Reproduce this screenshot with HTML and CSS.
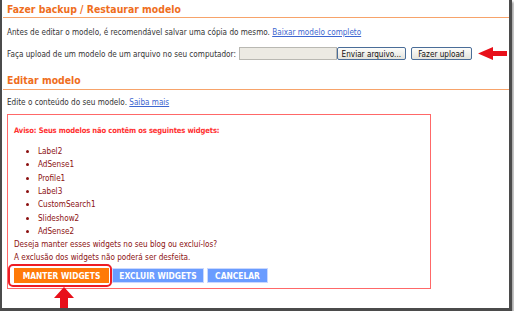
FILE: index.html
```html
<!DOCTYPE html>
<html lang="pt">
<head>
  <meta charset="UTF-8" />
  <title>Editar modelo</title>
  <link rel="stylesheet" href="styles.css">
</head>
<body>

  <div class="shot">

    <!-- Backup / restaurar -->
    <h2>Fazer backup / Restaurar modelo</h2>
    <p class="intro">Antes de editar o modelo, é recomendável salvar uma cópia do mesmo. <a href="#">Baixar modelo completo</a></p>

    <div class="upload-row">
      <span>Faça upload de um modelo de um arquivo no seu computador:</span>
      <span class="file-box"></span>
      <button class="xp-btn browse">Enviar arquivo...</button>
      <button class="xp-btn upload">Fazer upload</button>
      <svg class="arrow-left" width="29" height="13" viewBox="0 0 29 13">
        <polygon points="0,6.5 15,0 15,4 29,4 29,9 15,9 15,13" fill="#e8101a"/>
      </svg>
    </div>

    <!-- Editar -->
    <h2 class="second">Editar modelo</h2>
    <p class="intro second">Edite o conteúdo do seu modelo. <a href="#">Saiba mais</a></p>

    <div class="warning-box">
      <p class="warning">Aviso: Seus modelos não contêm os seguintes widgets:</p>
      <ul class="widgets">
        <li>Label2</li>
        <li>AdSense1</li>
        <li>Profile1</li>
        <li>Label3</li>
        <li>CustomSearch1</li>
        <li>Slideshow2</li>
        <li>AdSense2</li>
      </ul>
      <p class="question">Deseja manter esses widgets no seu blog ou excluí-los?<br>A exclusão dos widgets não poderá ser desfeita.</p>
      <div class="actions">
        <span class="highlight"><button class="act orange">MANTER WIDGETS</button></span>
        <button class="act blue excluir">EXCLUIR WIDGETS</button>
        <button class="act blue cancelar">CANCELAR</button>
      </div>
      <svg class="arrow-up" width="20" height="21" viewBox="0 0 20 21">
        <polygon points="10,0 20,11 14,11 14,21 6,21 6,11 0,11" fill="#e8101a"/>
      </svg>
    </div>

  </div>

</body>
</html>
```

FILE: styles.css
```css
body {
  margin: 0;
  background-color: #fff;
  font-family: "DejaVu Sans Condensed", "DejaVu Sans", sans-serif;
  font-size: 8.1px;
  color: #333;
}

.shot {
  position: relative;
  box-sizing: border-box;
  width: 512px;
  height: 311px;
  padding-left: 1px;
  border: solid #4b4b4b;
  border-width: 0 3px 3px 2px;
  box-shadow: 2px 2px 2px #aaa;
  overflow: hidden;
}

h2 {
  margin: 0;
  padding: 1.5px 0 1.5px 4px;
  line-height: 14px;
  font-size: 10.4px;
  font-weight: bold;
  color: #ef6e1d;
  border-bottom: 1px solid #f7a36a;
}

h2.second {
  margin-top: 11.5px;
}

p {
  margin: 0;
}

.intro {
  margin-top: 8px;
  padding-left: 4px;
  line-height: 12px;
}

.intro.second {
  margin-top: 6px;
}

a {
  color: #3d66d0;
}

.upload-row {
  display: flex;
  align-items: center;
  height: 13px;
  margin-top: 9px;
  padding-left: 4px;
}

.file-box {
  box-sizing: border-box;
  width: 98px;
  height: 13px;
  margin-left: 3px;
  background-color: #eceae3;
  border: 1px solid #b9b8b2;
}

.xp-btn {
  box-sizing: border-box;
  height: 13px;
  padding: 0;
  font-family: "DejaVu Sans Condensed", "DejaVu Sans", sans-serif;
  font-size: 8.1px;
  color: #111;
  background: linear-gradient(#fdfdfb, #e4e3dc);
  border: 1px solid #4a6d98;
  border-radius: 2px;
}

.xp-btn.browse {
  width: 69px;
}

.xp-btn.upload {
  width: 61px;
  margin-left: 5px;
}

.arrow-left {
  margin-left: 6px;
}

.warning-box {
  position: relative;
  box-sizing: border-box;
  width: 424px;
  height: 175px;
  margin: 6px 0 0 4px;
  padding: 10px 0 0 6px;
  border: 1px solid #ff6868;
}

.warning {
  line-height: 12px;
  font-size: 7.6px;
  letter-spacing: -0.15px;
  color: #ff3030;
  font-weight: bold;
}

.widgets {
  margin: 8.5px 0 0;
  padding-left: 24px;
  color: #8b1010;
  list-style: disc;
}

.widgets li {
  line-height: 13.33px;
}

.question {
  color: #8b1010;
  line-height: 13px;
}

.actions {
  display: flex;
  align-items: center;
  margin-left: -6px;
}

.highlight {
  display: flex;
  padding: 2px 1px 2px 4px;
  border: 2px solid #ee1c24;
  border-radius: 5px;
}

.act {
  box-sizing: border-box;
  height: 15px;
  padding: 0;
  font-family: "DejaVu Sans Condensed", "DejaVu Sans", sans-serif;
  font-size: 8.4px;
  font-weight: bold;
  color: #fff;
  border: 1px solid #c9d8ff;
}

.act.orange {
  width: 95px;
  background-color: #ff7a08;
  border-color: #ff7a08;
}

.act.blue {
  background-color: #6a9cff;
}

.act.excluir {
  width: 92px;
}

.act.cancelar {
  width: 61px;
  margin-left: 3px;
}

.arrow-up {
  position: absolute;
  left: 46px;
  top: 172px;
}
```
